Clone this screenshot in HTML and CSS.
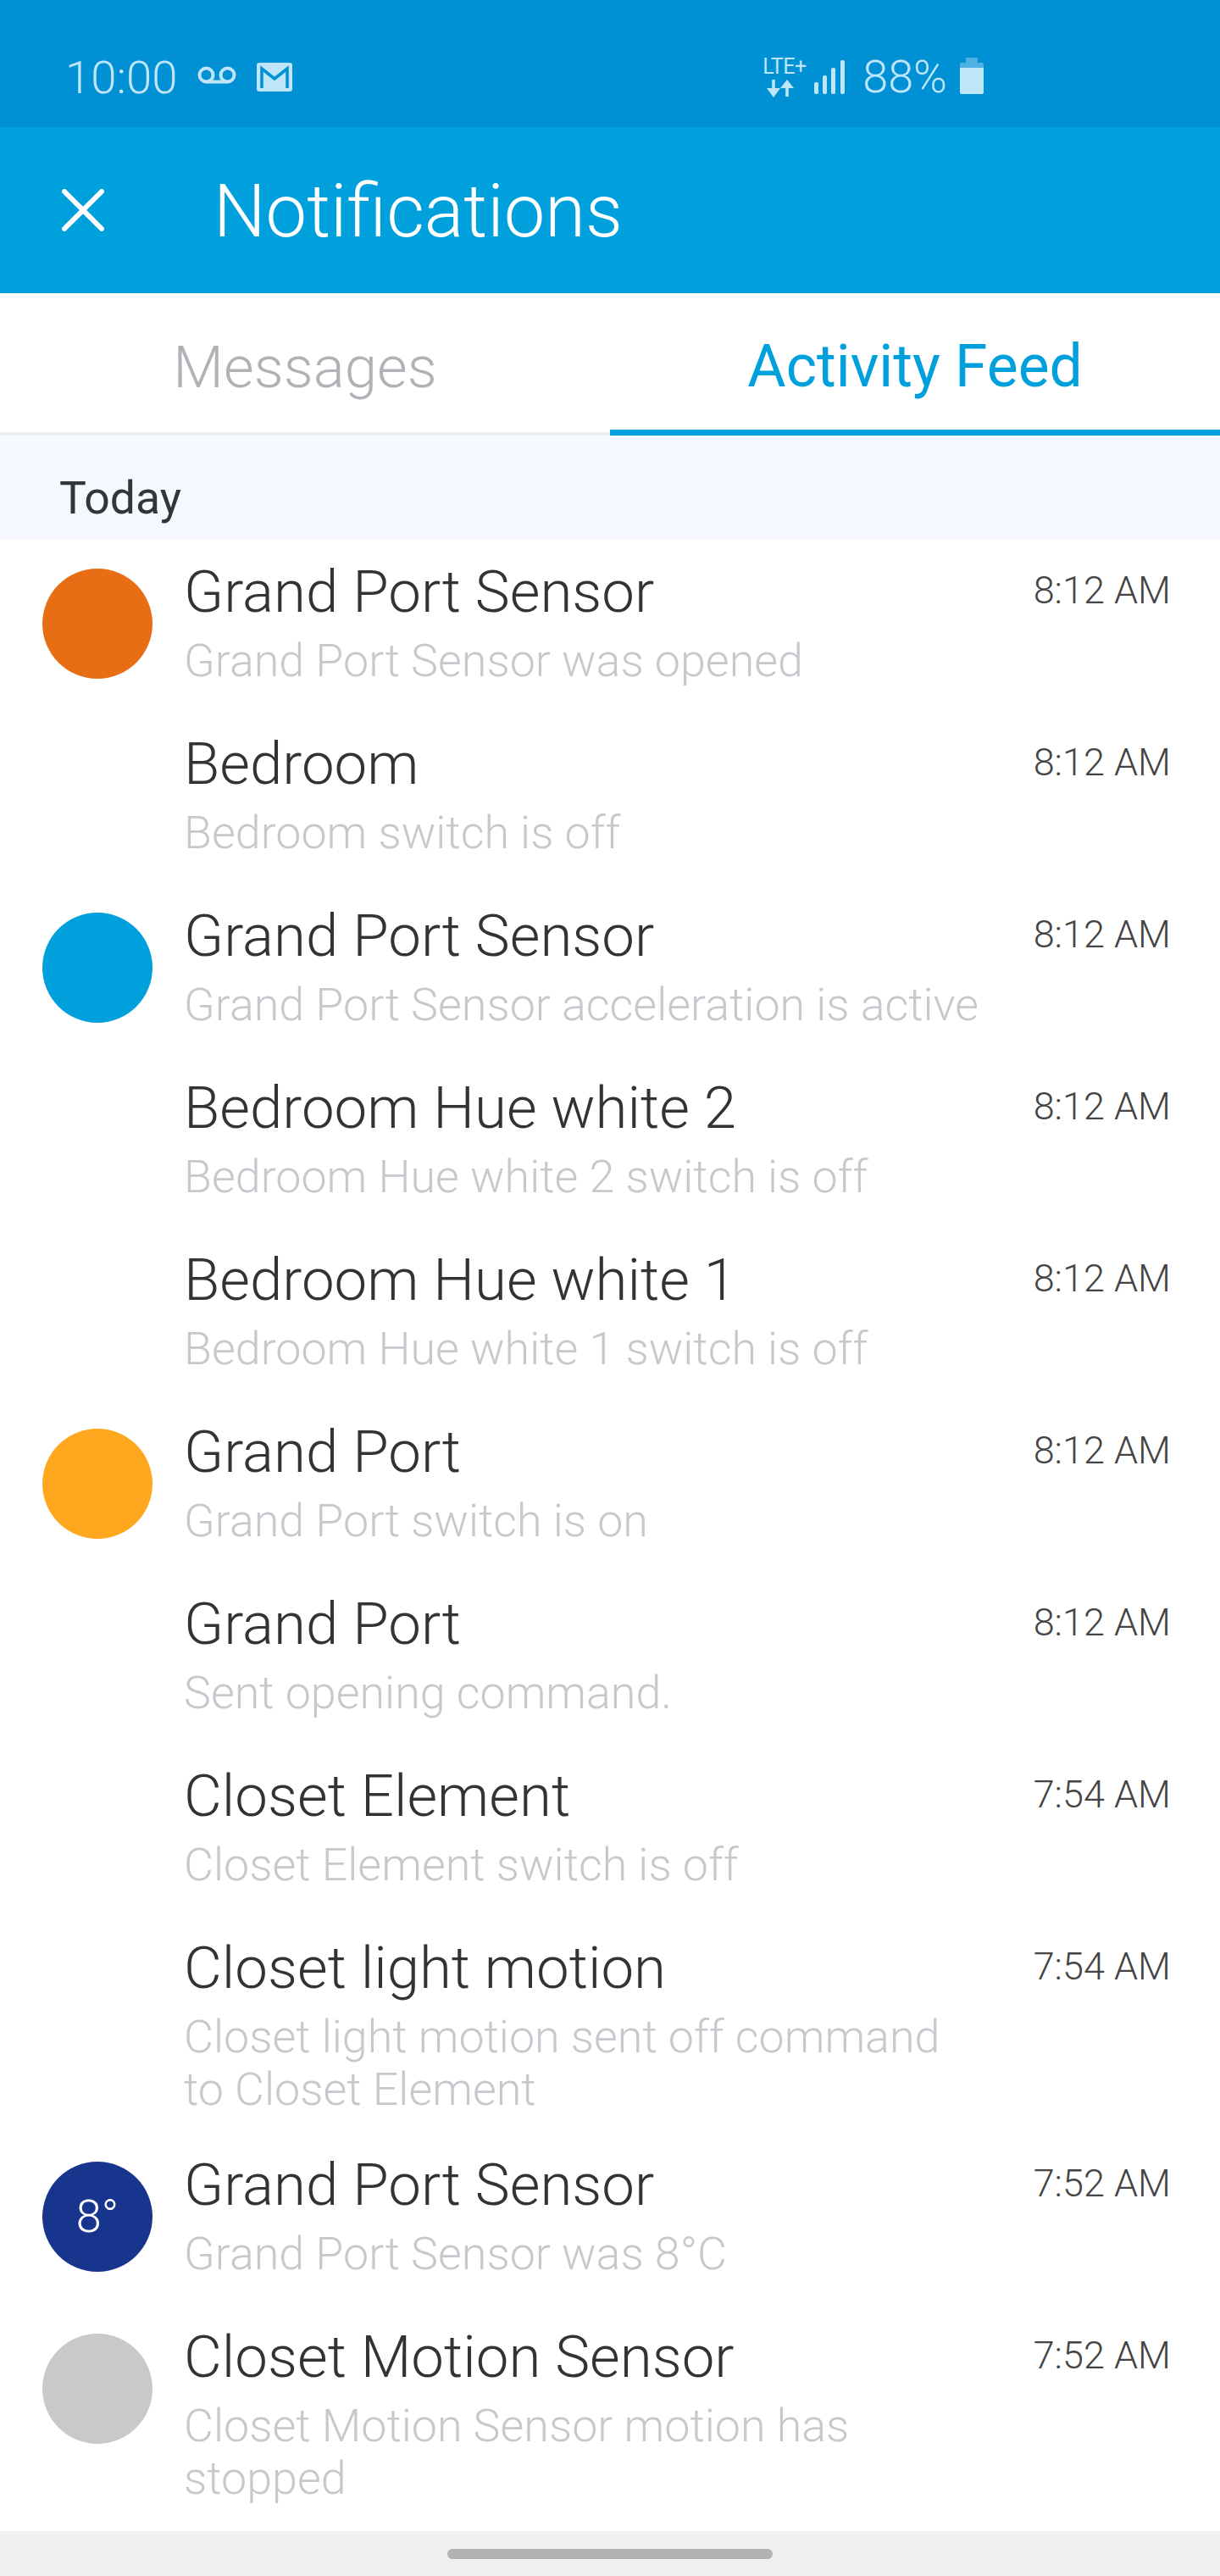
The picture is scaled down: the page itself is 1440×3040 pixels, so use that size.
FILE: index.html
```html
<!DOCTYPE html>
<html lang="en">
<head>
<meta charset="utf-8">
<title>Notifications</title>
<link rel="stylesheet" href="styles.css">
</head>
<body>
<div class="screen">
  <div class="status">
    <div class="status-left">
      <span class="clock">10:00</span>
      <svg class="ic-vm" width="46" height="22" viewBox="0 0 46 22"><g fill="none" stroke="#BFE5F8" stroke-width="4"><circle cx="10.5" cy="10.5" r="8"/><circle cx="35.5" cy="10.5" r="8"/><path d="M10.5 18.5h25"/></g></svg>
      <svg class="ic-mail" width="42" height="34" viewBox="0 0 42 34"><rect width="42" height="34" rx="3" fill="#BFE5F8"/><path d="M6 30V7l15 12L36 7v23" fill="none" stroke="#0091D5" stroke-width="3.6"/></svg>
    </div>
    <div class="status-right">
      <div class="net">
        <span class="lte">LTE+</span>
        <svg class="arrows" width="32" height="21" viewBox="0 0 32 21"><path d="M8 0v12M24 20V8" stroke="#BFE5F8" stroke-width="3.6" fill="none"/><path d="M0 10h16l-8 11zM16 10h16L24 0z" fill="#BFE5F8"/></svg>
      </div>
      <svg class="signal" width="37" height="40" viewBox="0 0 37 40"><g fill="#BFE5F8"><rect x="0" y="26" width="5" height="14" rx="2"/><rect x="10" y="18" width="5" height="22" rx="2"/><rect x="20" y="9" width="5" height="31" rx="2"/><rect x="31" y="0" width="5" height="40" rx="2"/></g></svg>
      <span class="pct">88%</span>
      <svg class="battery" width="28" height="43" viewBox="0 0 28 43"><path d="M7 0h14v6H7zM2 6h24a2 2 0 0 1 2 2v4H0V8a2 2 0 0 1 2-2z" fill="#4FB0E3"/><path d="M0 12h28v29a2 2 0 0 1-2 2H2a2 2 0 0 1-2-2z" fill="#BFE5F8"/></svg>
    </div>
  </div>
  <header class="appbar">
    <svg class="close" width="50" height="50" viewBox="0 0 50 50"><path d="M3 3l44 44M47 3L3 47" stroke="#fff" stroke-width="6" stroke-linecap="round"/></svg>
    <h1 class="appbar-title">Notifications</h1>
  </header>
  <nav class="tabs">
    <div class="tab">Messages</div>
    <div class="tab tab-active">Activity Feed</div>
  </nav>
  <div class="section">Today</div>
  <main class="list">
    <div class="row"><div class="dot dot-orange"></div><div class="text"><div class="name">Grand Port Sensor</div><div class="desc">Grand Port Sensor was opened</div></div><div class="time">8:12 AM</div></div>
    <div class="row"><div class="dot"></div><div class="text"><div class="name">Bedroom</div><div class="desc">Bedroom switch is off</div></div><div class="time">8:12 AM</div></div>
    <div class="row"><div class="dot dot-blue"></div><div class="text"><div class="name">Grand Port Sensor</div><div class="desc">Grand Port Sensor acceleration is active</div></div><div class="time">8:12 AM</div></div>
    <div class="row"><div class="dot"></div><div class="text"><div class="name">Bedroom Hue white 2</div><div class="desc">Bedroom Hue white 2 switch is off</div></div><div class="time">8:12 AM</div></div>
    <div class="row"><div class="dot"></div><div class="text"><div class="name">Bedroom Hue white 1</div><div class="desc">Bedroom Hue white 1 switch is off</div></div><div class="time">8:12 AM</div></div>
    <div class="row"><div class="dot dot-amber"></div><div class="text"><div class="name">Grand Port</div><div class="desc">Grand Port switch is on</div></div><div class="time">8:12 AM</div></div>
    <div class="row"><div class="dot"></div><div class="text"><div class="name">Grand Port</div><div class="desc">Sent opening command.</div></div><div class="time">8:12 AM</div></div>
    <div class="row"><div class="dot"></div><div class="text"><div class="name">Closet Element</div><div class="desc">Closet Element switch is off</div></div><div class="time">7:54 AM</div></div>
    <div class="row"><div class="dot"></div><div class="text"><div class="name">Closet light motion</div><div class="desc">Closet light motion sent off command to Closet Element</div></div><div class="time">7:54 AM</div></div>
    <div class="row"><div class="dot dot-navy"><span class="temp">8°</span></div><div class="text"><div class="name">Grand Port Sensor</div><div class="desc">Grand Port Sensor was 8°C</div></div><div class="time">7:52 AM</div></div>
    <div class="row"><div class="dot dot-grey"></div><div class="text"><div class="name">Closet Motion Sensor</div><div class="desc">Closet Motion Sensor motion has stopped</div></div><div class="time">7:52 AM</div></div>
  </main>
  <footer class="navbar"><div class="pill"></div></footer>
</div>
</body>
</html>
```
FILE: styles.css
```css
* { box-sizing: border-box; }
html, body { margin: 0; padding: 0; background: #fff; }
body { font-family: Roboto, "Liberation Sans", sans-serif; font-weight: 300; }
.screen { width: 1440px; height: 3040px; display: flex; flex-direction: column; overflow: hidden; }

.status { height: 150px; flex: none; background: #0091D5; color: #BFE5F8; display: flex; justify-content: space-between; align-items: flex-start; padding: 66px 279px 0 77px; }
.status-left, .status-right { display: flex; align-items: center; height: 50px; }
.clock { font-size: 54.5px; line-height: 50px; }
.ic-vm { margin-left: 24px; margin-top: -4px; }
.ic-mail { margin-left: 24px; margin-top: 0; }
.net { display: flex; flex-direction: column; align-items: flex-start; width: 50px; }
.lte { font-size: 25px; line-height: 22px; font-weight: 400; letter-spacing: -0.5px; white-space: nowrap; }
.arrows { margin: 4px 0 0 5px; }
.signal { margin-left: 11px; }
.pct { font-size: 54px; line-height: 50px; margin-left: 20px; }
.battery { margin-left: 15px; margin-top: -3px; }

.appbar { height: 196px; flex: none; background: #00A0DC; display: flex; align-items: center; padding-left: 73px; }
.close { flex: none; }
.appbar-title { margin: 4px 0 0 129px; color: #fff; font-size: 86.7px; line-height: 100px; font-weight: 300; }

.tabs { height: 168px; flex: none; display: flex; border-bottom: 4px solid #EBEFF2; }
.tab { flex: 1; height: 168px; display: flex; align-items: center; justify-content: center; font-size: 69px; color: #B0B2B7; padding-top: 6px; }
.tab-active { color: #00A0DC; font-weight: 400; font-size: 69.5px; padding-top: 11px; border-bottom: 7px solid #00A0DC; }

.section { height: 123px; flex: none; background: #F5F8FE; color: #33353A; font-size: 53.5px; line-height: 80px; padding: 34px 0 0 70px; font-weight: 400; }

.list { flex: 1; min-height: 0; }
.row { display: flex; min-height: 203px; padding: 20px 58px 20px 50px; }
.dot { flex: none; width: 130px; height: 130px; border-radius: 50%; margin-top: 14px; display: flex; align-items: center; justify-content: center; color: #fff; }
.temp { font-size: 54px; line-height: 60px; }
.dot-orange { background: #E86E15; }
.dot-blue { background: #00A0DC; }
.dot-amber { background: #FFA81F; }
.dot-navy { background: #18358E; }
.dot-grey { background: #C9C9C9; }
.text { width: 948px; flex: none; margin-left: 37px; }
.name { font-size: 69px; line-height: 80px; color: #333; margin-top: 2px; }
.desc { font-size: 53.8px; line-height: 62px; color: #C6C8CD; margin-top: 10px; }
.time { margin-left: auto; font-size: 45px; line-height: 80px; color: #444; white-space: nowrap; }

.navbar { height: 53px; flex: none; background: #F0F0F0; display: flex; justify-content: center; padding-top: 21px; }
.pill { width: 384px; height: 12px; border-radius: 6px; background: #B2B2B2; }
```
